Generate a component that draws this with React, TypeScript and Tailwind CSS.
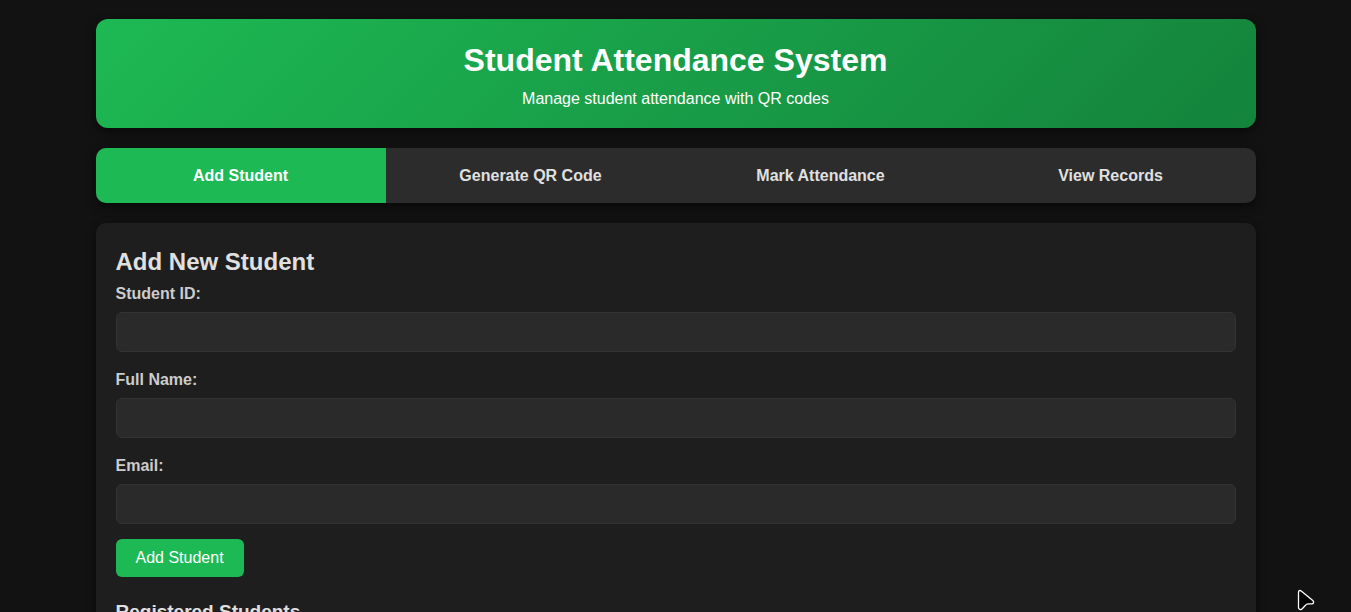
import { useState } from "react";

const tabs = ["Add Student", "Generate QR Code", "Mark Attendance", "View Records"];

const fields = [
  { id: "student-id", label: "Student ID:", type: "text" },
  { id: "full-name", label: "Full Name:", type: "text" },
  { id: "email", label: "Email:", type: "email" },
];

function Header() {
  return (
    <header className="rounded-xl bg-[linear-gradient(135deg,#1db954,#14833b)] px-5 pt-5 pb-[19px] text-center text-white shadow-[0_4px_10px_rgba(0,0,0,0.5)]">
      <h1 className="text-[32px] leading-[42px] font-bold">Student Attendance System</h1>
      <p className="mt-2 text-base leading-5">Manage student attendance with QR codes</p>
    </header>
  );
}

function TabBar({ active, onSelect }: { active: number; onSelect: (index: number) => void }) {
  return (
    <nav className="grid grid-cols-4 overflow-hidden rounded-[10px] bg-[#2c2c2c] shadow-[0_4px_10px_rgba(0,0,0,0.5)]">
      {tabs.map((tab, index) => (
        <button
          key={tab}
          type="button"
          onClick={() => onSelect(index)}
          className={
            index === active
              ? "bg-[#1db954] p-4 text-base leading-[23px] font-bold text-white"
              : "p-4 text-base leading-[23px] font-bold text-[#e0e0e0]"
          }
        >
          {tab}
        </button>
      ))}
    </nav>
  );
}

function StudentForm() {
  return (
    <form onSubmit={(event) => event.preventDefault()}>
      <div className="flex flex-col gap-[18px]">
        {fields.map((field) => (
          <div key={field.id} className="flex flex-col gap-2">
            <label htmlFor={field.id} className="text-base leading-5 font-bold text-[#cccccc]">
              {field.label}
            </label>
            <input
              id={field.id}
              type={field.type}
              className="h-10 w-full rounded-md border border-[#333333] bg-[#2a2a2a] px-3 text-base text-[#e0e0e0] outline-none"
            />
          </div>
        ))}
      </div>
      <button
        type="submit"
        className="mt-[15px] rounded-md bg-[#1db954] px-5 py-[9px] text-base leading-5 text-white"
      >
        Add Student
      </button>
    </form>
  );
}

function Pointer() {
  return (
    <svg
      aria-hidden="true"
      viewBox="0 0 20 24"
      className="pointer-events-none fixed right-[35px] bottom-0 h-6 w-5"
    >
      <path
        d="M2.5 4.2C2.5 2.6 4 2 5.2 3.1L16.8 12.6C18.3 13.9 17.6 15.9 15.7 15.9H12.2C11 15.9 10.2 16.3 9.5 17.2L6.2 20.8C4.9 22.2 2.5 21.5 2.5 19.5Z"
        fill="#000000"
        stroke="#ffffff"
        strokeWidth="1.3"
        strokeLinejoin="round"
      />
    </svg>
  );
}

export default function App() {
  const [active, setActive] = useState(0);

  return (
    <div className="min-h-screen bg-[#121212] px-5 pt-[19px] pb-5 font-['Liberation_Sans',Arial,sans-serif] text-[#e0e0e0]">
      <div className="mx-auto flex max-w-[1160px] flex-col gap-5">
        <Header />
        <TabBar active={active} onSelect={setActive} />
        <main className="rounded-[10px] bg-[#1e1e1e] px-5 pt-6 pb-5 shadow-[0_4px_10px_rgba(0,0,0,0.5)]">
          <h2 className="mb-2 text-2xl leading-[29px] font-bold">Add New Student</h2>
          <StudentForm />
          <h3 className="mt-6 text-[19px] leading-[22px] font-bold">Registered Students</h3>
        </main>
      </div>
      <Pointer />
    </div>
  );
}
